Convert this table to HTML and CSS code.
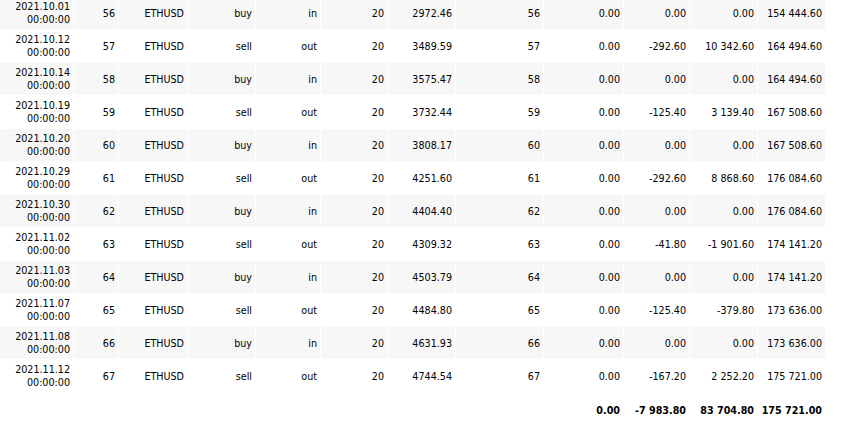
FILE: index.html
```html
<!DOCTYPE html>
<html>
<head>
<meta charset="utf-8">
<link rel="stylesheet" href="styles.css">
</head>
<body>
<table class="deals">
<colgroup>
<col class="c-time"><col class="c-deal"><col class="c-sym"><col class="c-type"><col class="c-dir"><col class="c-vol"><col class="c-price"><col class="c-order"><col class="c-comm"><col class="c-swap"><col class="c-profit"><col class="c-bal">
</colgroup>
<tbody>
<tr class="alt"><td>2021.10.01<br>00:00:00</td><td>56</td><td>ETHUSD</td><td>buy</td><td>in</td><td>20</td><td>2972.46</td><td>56</td><td>0.00</td><td>0.00</td><td>0.00</td><td>154 444.60</td></tr>
<tr><td>2021.10.12<br>00:00:00</td><td>57</td><td>ETHUSD</td><td>sell</td><td>out</td><td>20</td><td>3489.59</td><td>57</td><td>0.00</td><td>-292.60</td><td>10 342.60</td><td>164 494.60</td></tr>
<tr class="alt"><td>2021.10.14<br>00:00:00</td><td>58</td><td>ETHUSD</td><td>buy</td><td>in</td><td>20</td><td>3575.47</td><td>58</td><td>0.00</td><td>0.00</td><td>0.00</td><td>164 494.60</td></tr>
<tr><td>2021.10.19<br>00:00:00</td><td>59</td><td>ETHUSD</td><td>sell</td><td>out</td><td>20</td><td>3732.44</td><td>59</td><td>0.00</td><td>-125.40</td><td>3 139.40</td><td>167 508.60</td></tr>
<tr class="alt"><td>2021.10.20<br>00:00:00</td><td>60</td><td>ETHUSD</td><td>buy</td><td>in</td><td>20</td><td>3808.17</td><td>60</td><td>0.00</td><td>0.00</td><td>0.00</td><td>167 508.60</td></tr>
<tr><td>2021.10.29<br>00:00:00</td><td>61</td><td>ETHUSD</td><td>sell</td><td>out</td><td>20</td><td>4251.60</td><td>61</td><td>0.00</td><td>-292.60</td><td>8 868.60</td><td>176 084.60</td></tr>
<tr class="alt"><td>2021.10.30<br>00:00:00</td><td>62</td><td>ETHUSD</td><td>buy</td><td>in</td><td>20</td><td>4404.40</td><td>62</td><td>0.00</td><td>0.00</td><td>0.00</td><td>176 084.60</td></tr>
<tr><td>2021.11.02<br>00:00:00</td><td>63</td><td>ETHUSD</td><td>sell</td><td>out</td><td>20</td><td>4309.32</td><td>63</td><td>0.00</td><td>-41.80</td><td>-1 901.60</td><td>174 141.20</td></tr>
<tr class="alt"><td>2021.11.03<br>00:00:00</td><td>64</td><td>ETHUSD</td><td>buy</td><td>in</td><td>20</td><td>4503.79</td><td>64</td><td>0.00</td><td>0.00</td><td>0.00</td><td>174 141.20</td></tr>
<tr><td>2021.11.07<br>00:00:00</td><td>65</td><td>ETHUSD</td><td>sell</td><td>out</td><td>20</td><td>4484.80</td><td>65</td><td>0.00</td><td>-125.40</td><td>-379.80</td><td>173 636.00</td></tr>
<tr class="alt"><td>2021.11.08<br>00:00:00</td><td>66</td><td>ETHUSD</td><td>buy</td><td>in</td><td>20</td><td>4631.93</td><td>66</td><td>0.00</td><td>0.00</td><td>0.00</td><td>173 636.00</td></tr>
<tr><td>2021.11.12<br>00:00:00</td><td>67</td><td>ETHUSD</td><td>sell</td><td>out</td><td>20</td><td>4744.54</td><td>67</td><td>0.00</td><td>-167.20</td><td>2 252.20</td><td>175 721.00</td></tr>
<tr class="total"><td colspan="8"></td><td>0.00</td><td>-7 983.80</td><td>83 704.80</td><td>175 721.00</td></tr>
</tbody>
</table>
</body>
</html>
```
FILE: styles.css
```css
html, body {
  margin: 0;
  padding: 0;
  background: #ffffff;
}

.deals {
  margin: -4px 0 0 -1px;
  border-collapse: separate;
  border-spacing: 1px;
  table-layout: fixed;
  width: 827px;
  font-family: "DejaVu Sans Condensed", "DejaVu Sans", sans-serif;
  font-stretch: condensed;
  font-size: 10.67px;
  line-height: 13px;
  color: #000000;
}

.deals td {
  box-sizing: border-box;
  height: 32px;
  padding: 3px;
  text-align: right;
  white-space: nowrap;
  vertical-align: middle;
}

.deals tr.alt td {
  background: #f7f7f7;
}

.deals tr.total td {
  height: 34px;
  padding-top: 3px;
  font-weight: bold;
}

.c-time { width: 73px; }
.c-deal { width: 44px; }
.c-sym { width: 68px; }
.c-type { width: 67px; }
.c-dir { width: 64px; }
.c-vol { width: 66px; }
.c-price { width: 67px; }
.c-order { width: 87px; }
.c-comm { width: 79px; }
.c-swap { width: 65px; }
.c-profit { width: 67px; }
.c-bal { width: 67px; }
```
